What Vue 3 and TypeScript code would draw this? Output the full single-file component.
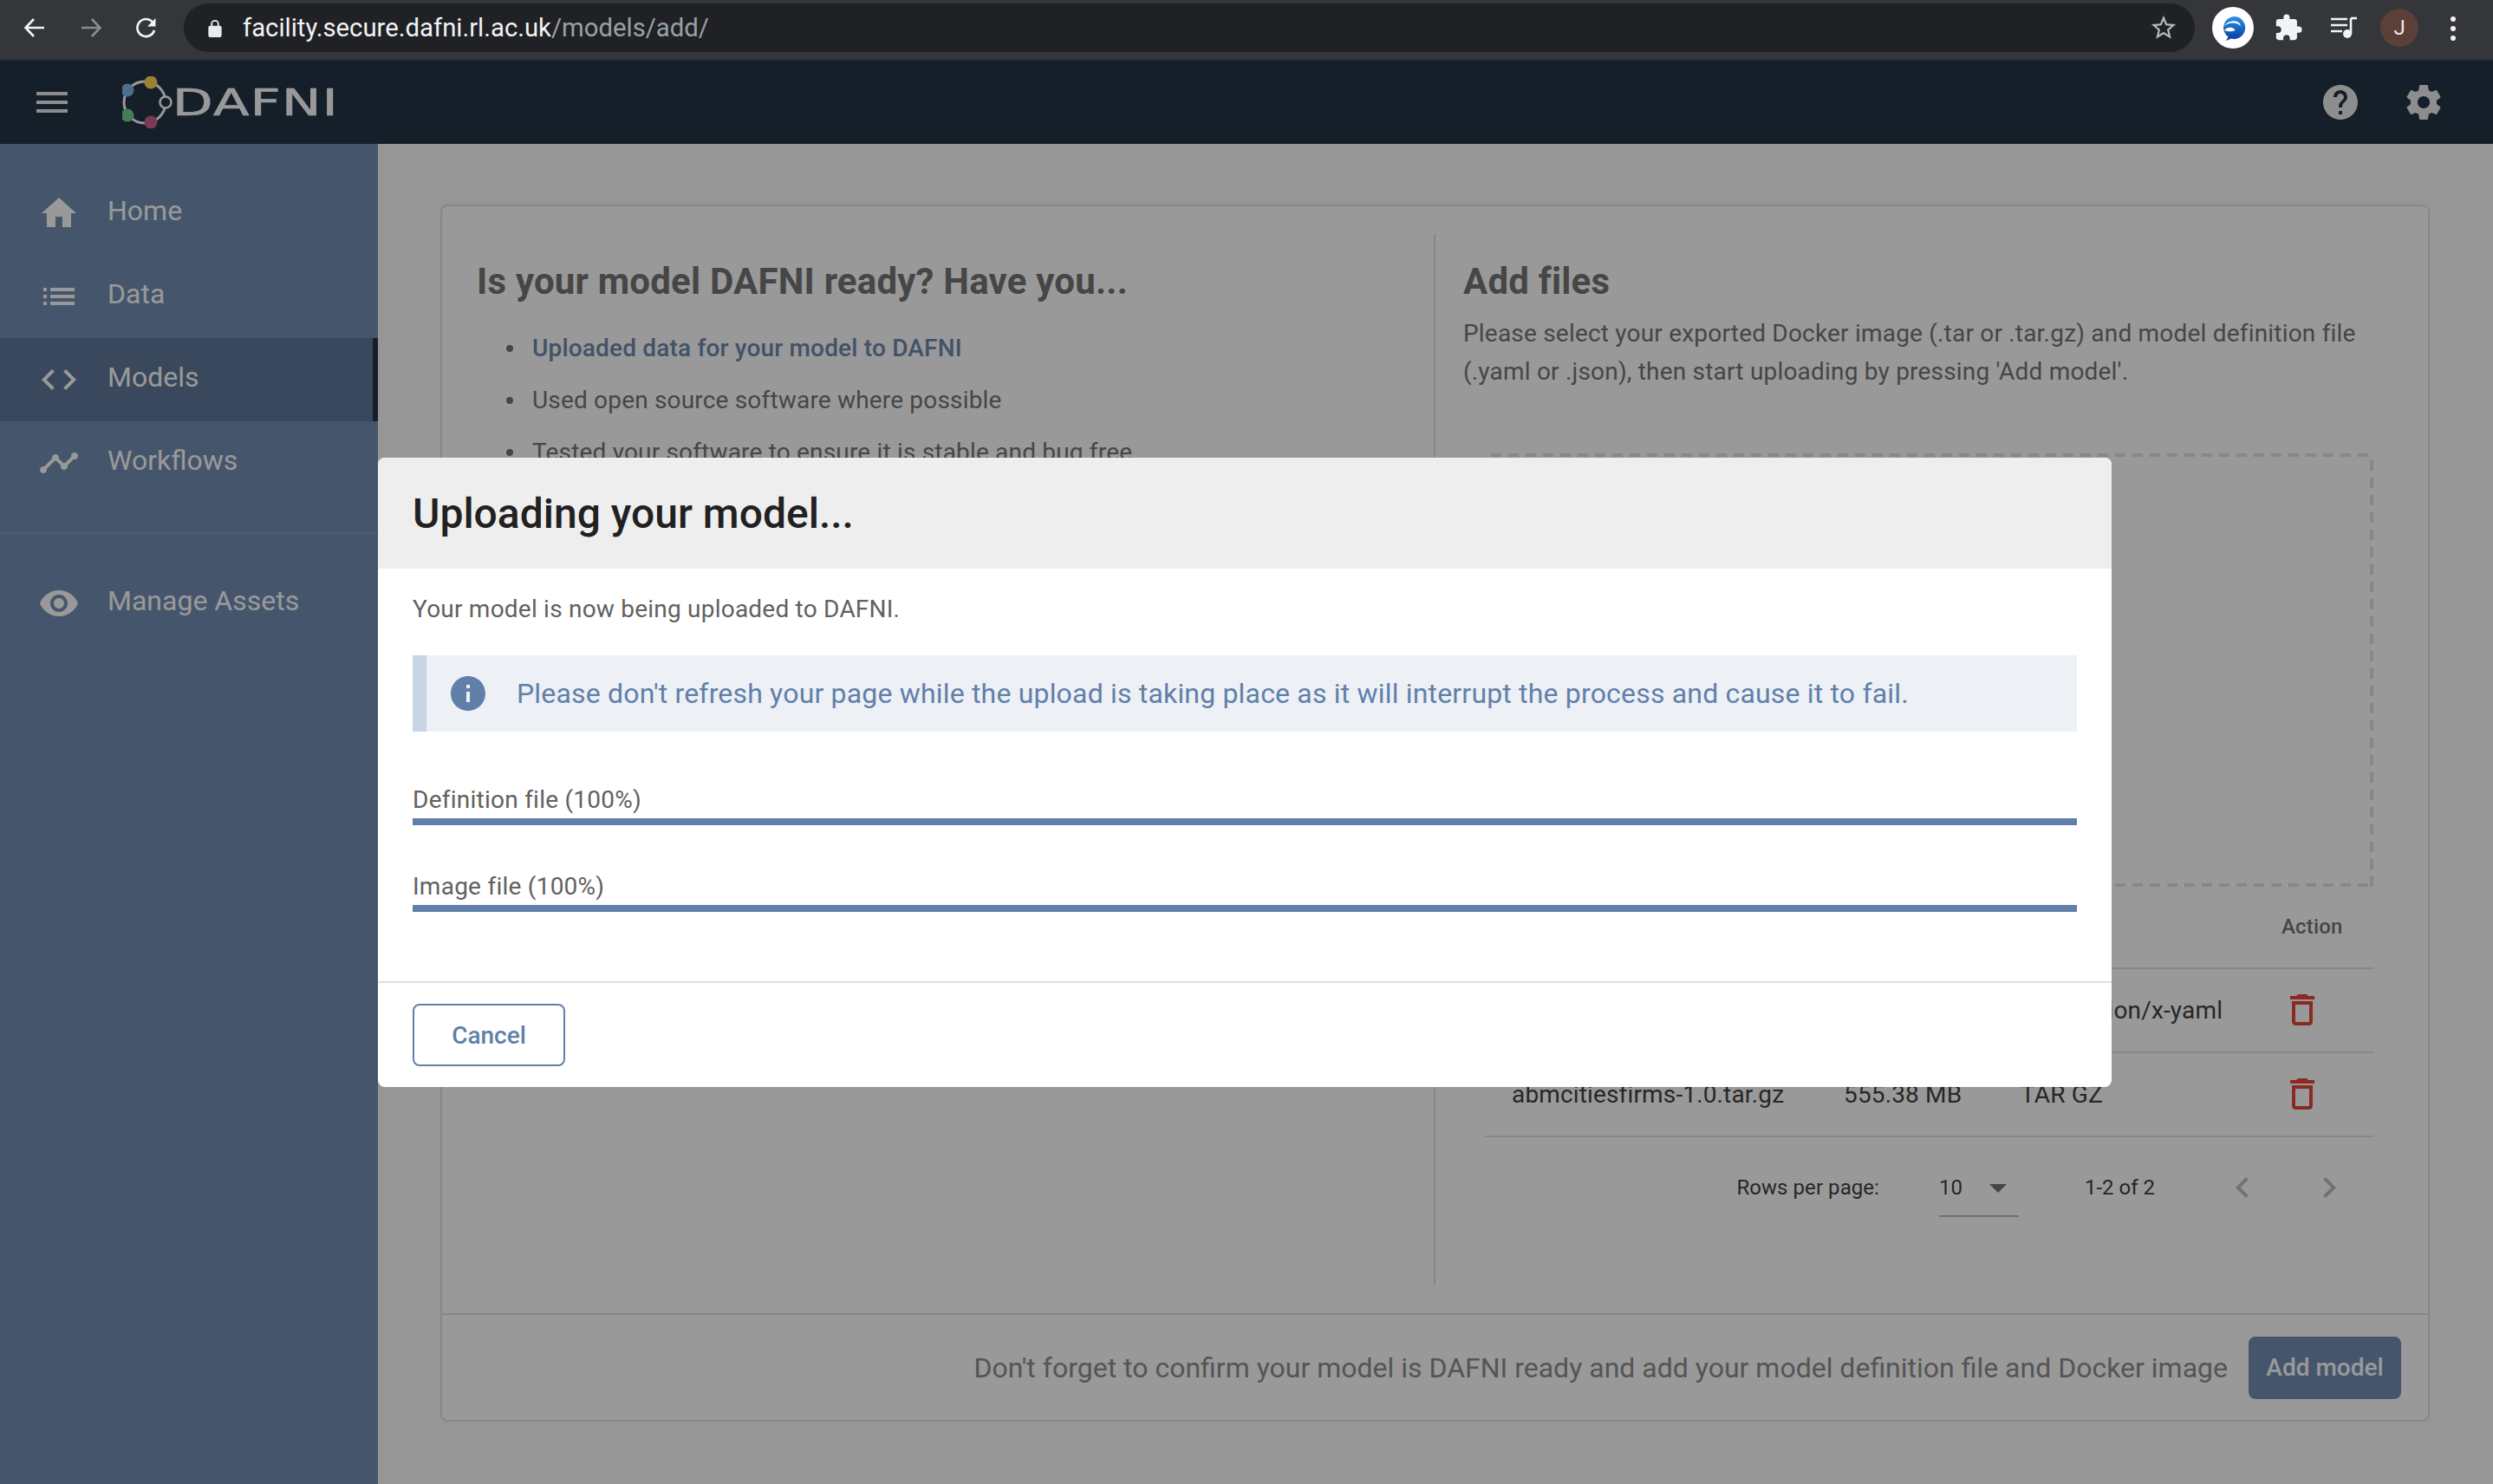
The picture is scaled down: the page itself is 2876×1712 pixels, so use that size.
<script setup lang="ts">
interface NavItem { label: string; path: string; active?: boolean }
const nav: NavItem[] = [
  { label: 'Home', path: 'M10 20v-6h4v6h5v-8h3L12 3 2 12h3v8z' },
  { label: 'Data', path: 'M3 13h2v-2H3v2zm0 4h2v-2H3v2zm0-8h2V7H3v2zm4 4h14v-2H7v2zm0 4h14v-2H7v2zM7 7v2h14V7H7z' },
  { label: 'Models', active: true, path: 'M9.4 16.6L4.8 12l4.6-4.6L8 6l-6 6 6 6 1.4-1.4zm5.2 0l4.6-4.6-4.6-4.6L16 6l6 6-6 6-1.4-1.4z' },
  { label: 'Workflows', path: 'M23 8c0 1.1-.9 2-2 2-.18 0-.35-.02-.51-.07l-3.56 3.55c.05.16.07.34.07.52 0 1.1-.9 2-2 2s-2-.9-2-2c0-.18.02-.36.07-.52l-2.55-2.55c-.16.05-.34.07-.52.07s-.36-.02-.52-.07l-4.55 4.56c.05.16.07.33.07.51 0 1.1-.9 2-2 2s-2-.9-2-2 .9-2 2-2c.18 0 .35.02.51.07l4.56-4.55C8.02 9.36 8 9.18 8 9c0-1.1.9-2 2-2s2 .9 2 2c0 .18-.02.36-.07.52l2.55 2.55c.16-.05.34-.07.52-.07s.36.02.52.07l3.55-3.56C19.02 8.35 19 8.18 19 8c0-1.1.9-2 2-2s2 .9 2 2z' },
]
const eye = 'M12 4.5C7 4.5 2.73 7.61 1 12c1.73 4.39 6 7.5 11 7.5s9.27-3.11 11-7.5c-1.73-4.39-6-7.5-11-7.5zM12 17c-2.76 0-5-2.24-5-5s2.24-5 5-5 5 2.24 5 5-2.24 5-5 5zm0-8c-1.66 0-3 1.34-3 3s1.34 3 3 3 3-1.34 3-3-1.34-3-3-3z'
const checks = [
  { text: 'Uploaded data for your model to DAFNI', link: true },
  { text: 'Used open source software where possible', link: false },
  { text: 'Tested your software to ensure it is stable and bug free', link: false },
]
const files = [
  { name: 'abmcitiesfirms.yaml', size: '2.1 KB', type: 'application/x-yaml' },
  { name: 'abmcitiesfirms-1.0.tar.gz', size: '555.38 MB', type: 'TAR GZ' },
]
const uploads = ['Definition file (100%)', 'Image file (100%)']
</script>

<template>
  <div class="app">
    <div class="chrome">
      <svg class="c-ic back" viewBox="0 0 28 28"><path d="M25 14H4M13 4 3.5 14 13 24" fill="none" stroke="#f1f3f4" stroke-width="2.6"/></svg>
      <svg class="c-ic fwd" viewBox="0 0 28 28"><path d="M3 14h21M15 4l9.5 10L15 24" fill="none" stroke="#8a8b8e" stroke-width="2.6"/></svg>
      <svg class="c-ic reload" viewBox="0 0 28 28"><path d="M23 17a10 10 0 1 1-2-9.5" fill="none" stroke="#f1f3f4" stroke-width="2.6"/><path d="M24.5 3v9.5H15z" fill="#f1f3f4"/></svg>
      <div class="omni">
        <svg class="lock" viewBox="0 0 16 22"><path d="M4 9V6a4 4 0 0 1 8 0v3" fill="none" stroke="#e8eaed" stroke-width="2"/><rect x="0" y="8" width="16" height="14" rx="2" fill="#e8eaed"/></svg>
        <span class="url">facility.secure.dafni.rl.ac.uk<span class="url-path">/models/add/</span></span>
        <svg class="star" viewBox="0 0 24 24"><path d="M22 9.24l-7.19-.62L12 2 9.19 8.63 2 9.24l5.46 4.73L5.82 21 12 17.27 18.18 21l-1.63-7.03L22 9.24zM12 15.4l-3.76 2.27 1-4.28-3.32-2.88 4.38-.38L12 6.1l1.71 4.04 4.38.38-3.32 2.88 1 4.28L12 15.4z" fill="#b4b6b9"/></svg>
      </div>
      <div class="ext">
        <svg viewBox="0 0 32 32" width="32" height="32">
          <defs><linearGradient id="extBlue" x1="0" y1="0" x2="0" y2="1"><stop offset="0" stop-color="#2b8fe6"/><stop offset="1" stop-color="#0b3a9c"/></linearGradient></defs>
          <path d="M17 3a13 13 0 1 1-3 25.600L8 31l2.500-4.500A13 13 0 0 1 17 3z" fill="url(#extBlue)"/>
          <path d="M6 14C9 9 16 7 21 9c2 1 3.500 2.500 4 5-3-3-7-4-11-3.500-3 .4-6 1.500-8 3.500z" fill="#fff"/>
          <path d="M6 19c2-3 6-4 9-3 1.500.5 3 1.500 3.500 3-3 1.500-8 2-12.500 0z" fill="#fff"/>
        </svg>
      </div>
      <svg class="puzzle" viewBox="0 0 24 24"><path d="M20.5 11H19V7c0-1.100-.9-2-2-2h-4V3.500a2.500 2.500 0 0 0-5 0V5H4c-1.100 0-2 .9-2 2v3.800h1.500c1.490 0 2.700 1.210 2.700 2.700s-1.210 2.700-2.700 2.700H2V20c0 1.100.9 2 2 2h3.800v-1.500c0-1.490 1.210-2.700 2.700-2.700s2.700 1.210 2.700 2.700V22H17c1.100 0 2-.9 2-2v-4h1.500a2.500 2.500 0 0 0 0-5z" fill="#f1f3f4"/></svg>
      <svg class="media" viewBox="0 0 32 28"><path d="M1 4h19M1 11h19M1 18h13" stroke="#f1f3f4" stroke-width="2.6" fill="none"/><path d="M24 3v18" stroke="#f1f3f4" stroke-width="2.6"/><path d="M24 3h7" stroke="#f1f3f4" stroke-width="2.6"/><circle cx="20" cy="21" r="5" fill="#f1f3f4"/></svg>
      <div class="avatar">J</div>
      <div class="dots"><i></i><i></i><i></i></div>
    </div>

    <div class="viewport">
      <header class="topbar">
        <svg class="icon" viewBox="0 0 24 24"><path d="M3 18h18v-2H3v2zm0-5h18v-2H3v2zm0-7v2h18V6H3z"/></svg>
        <div class="logo">
          <svg class="ring" viewBox="0 0 58 60" width="58" height="60">
            <circle cx="26" cy="30" r="24" fill="none" stroke="#fff" stroke-width="3"/>
            <circle cx="6" cy="16" r="7.500" fill="#85b7e9"/>
            <circle cx="33" cy="7" r="7.500" fill="#ffd953"/>
            <circle cx="6" cy="45" r="7.500" fill="#6ed08e"/>
            <circle cx="33" cy="53" r="7.500" fill="#c8618e"/>
            <circle cx="50" cy="30" r="6.500" fill="#233546" stroke="#fff" stroke-width="2.600"/>
          </svg>
          <span class="logo-text">DAFNI</span>
        </div>
        <div class="top-actions">
          <svg class="icon" viewBox="0 0 24 24"><path d="M12 2C6.48 2 2 6.48 2 12s4.48 10 10 10 10-4.48 10-10S17.52 2 12 2zm1 17h-2v-2h2v2zm2.07-7.75l-.9.92C13.45 12.9 13 13.5 13 15h-2v-.5c0-1.1.45-2.1 1.17-2.83l1.24-1.26c.37-.36.59-.86.59-1.41 0-1.1-.9-2-2-2s-2 .9-2 2H8c0-2.21 1.79-4 4-4s4 1.79 4 4c0 .88-.36 1.68-.93 2.25z"/></svg>
          <svg class="icon" viewBox="0 0 24 24"><path d="M19.43 12.98c.04-.32.07-.64.07-.98s-.03-.66-.07-.98l2.11-1.65c.19-.15.24-.42.12-.64l-2-3.46c-.12-.22-.39-.3-.61-.22l-2.49 1c-.52-.4-1.08-.73-1.69-.98l-.38-2.65C14.46 2.18 14.25 2 14 2h-4c-.25 0-.46.18-.49.42l-.38 2.65c-.61.25-1.17.59-1.69.98l-2.49-1c-.23-.09-.49 0-.61.22l-2 3.46c-.13.22-.07.49.12.64l2.11 1.65c-.04.32-.07.65-.07.98s.03.66.07.98l-2.11 1.65c-.19.15-.24.42-.12.64l2 3.46c.12.22.39.3.61.22l2.49-1c.52.4 1.08.73 1.69.98l.38 2.65c.03.24.24.42.49.42h4c.25 0 .46-.18.49-.42l.38-2.65c.61-.25 1.17-.59 1.69-.98l2.49 1c.23.09.49 0 .61-.22l2-3.46c.12-.22.07-.49-.12-.64l-2.11-1.65zM12 15.5c-1.93 0-3.5-1.57-3.5-3.5s1.57-3.5 3.5-3.5 3.5 1.57 3.5 3.5-1.57 3.5-3.5 3.5z"/></svg>
        </div>
      </header>

      <div class="below">
        <aside class="sidebar">
          <a v-for="item in nav" :key="item.label" class="nav-item" :class="{ active: item.active }">
            <svg class="icon" viewBox="0 0 24 24"><path :d="item.path"/></svg>
            <span>{{ item.label }}</span>
          </a>
          <div class="nav-divider"></div>
          <a class="nav-item">
            <svg class="icon" viewBox="0 0 24 24"><path :d="eye"/></svg>
            <span>Manage Assets</span>
          </a>
        </aside>

        <main class="main">
          <section class="card">
            <div class="card-top">
              <div class="col-left">
                <h2>Is your model DAFNI ready? Have you...</h2>
                <ul>
                  <li v-for="c in checks" :key="c.text" :class="{ link: c.link }">{{ c.text }}</li>
                </ul>
              </div>
              <div class="col-right">
                <h2>Add files</h2>
                <p>Please select your exported Docker image (.tar or .tar.gz) and model definition file (.yaml or .json), then start uploading by pressing 'Add model'.</p>
                <div class="drop"></div>
                <div class="table">
                  <div class="tr th">
                    <span>Name</span><span>Size</span><span>Type</span><span>Action</span>
                  </div>
                  <div v-for="f in files" :key="f.name" class="tr">
                    <span>{{ f.name }}</span><span>{{ f.size }}</span><span>{{ f.type }}</span>
                    <svg class="icon trash" viewBox="0 0 24 24"><path d="M6 19c0 1.1.9 2 2 2h8c1.1 0 2-.9 2-2V7H6v12zM8 9h8v10H8V9zm7.5-5l-1-1h-5l-1 1H5v2h14V4z"/></svg>
                  </div>
                </div>
                <div class="pager">
                  <span class="rows">Rows per page:</span>
                  <div class="select">
                    <span>10</span>
                    <svg class="icon" viewBox="0 0 24 24"><path d="M7 10l5 5 5-5z"/></svg>
                  </div>
                  <span class="range">1-2 of 2</span>
                  <svg class="icon chev" viewBox="0 0 24 24"><path d="M15.41 7.41L14 6l-6 6 6 6 1.41-1.41L10.83 12z"/></svg>
                  <svg class="icon chev" viewBox="0 0 24 24"><path d="M10 6L8.59 7.41 13.17 12l-4.58 4.59L10 18l6-6z"/></svg>
                </div>
              </div>
            </div>
            <div class="card-foot">
              <span>Don't forget to confirm your model is DAFNI ready and add your model definition file and Docker image</span>
              <button class="add" type="button">Add model</button>
            </div>
          </section>
        </main>
      </div>

      <div class="scrim">
        <div class="dialog">
          <div class="d-head"><h1>Uploading your model...</h1></div>
          <div class="d-body">
            <p class="d-lead">Your model is now being uploaded to DAFNI.</p>
            <div class="alert">
              <svg viewBox="0 0 24 24" width="48" height="48"><path d="M12 2C6.48 2 2 6.48 2 12s4.48 10 10 10 10-4.48 10-10S17.52 2 12 2zm1 15h-2v-6h2v6zm0-8h-2V7h2v2z" fill="#6080aa"/></svg>
              <span>Please don't refresh your page while the upload is taking place as it will interrupt the process and cause it to fail.</span>
            </div>
            <div class="uploads">
              <div v-for="u in uploads" :key="u" class="upload">
                <div class="u-label">{{ u }}</div>
                <div class="u-bar"></div>
              </div>
            </div>
          </div>
          <div class="d-foot"><button class="cancel" type="button">Cancel</button></div>
        </div>
      </div>
    </div>
  </div>
</template>

<style>
html, body { margin: 0; padding: 0; }
</style>

<style scoped>
.app { width: 2876px; height: 1712px; display: flex; flex-direction: column; overflow: hidden; font-family: Roboto, sans-serif; background: #fafafa; }
.icon { width: 48px; height: 48px; flex: none; fill: currentColor; display: block; }

.chrome { height: 70px; flex: none; box-sizing: border-box; background: #35363a; border-bottom: 2px solid #2d2e31; display: flex; align-items: flex-start; position: relative; }
.c-ic { width: 28px; height: 28px; flex: none; margin-top: 18px; }
.back { margin-left: 26px; }
.fwd { margin-left: 37px; }
.reload { margin-left: 36px; }
.omni { margin-left: 29px; margin-top: 4px; width: 2320px; height: 56px; border-radius: 28px; background: #202124; display: flex; align-items: center; flex: none; }
.lock { width: 16px; height: 21px; margin-left: 28px; flex: none; }
.url { margin-left: 24px; font-size: 29.3px; color: #f1f3f4; white-space: nowrap; }
.url-path { color: #9aa0a6; }
.star { width: 34px; height: 34px; margin-left: auto; margin-right: 19px; flex: none; }
.ext { width: 48px; height: 48px; margin-left: 20px; margin-top: 8px; border-radius: 50%; background: #fff; display: flex; align-items: center; justify-content: center; flex: none; }
.puzzle { width: 34px; height: 34px; margin-left: 23px; margin-top: 15px; flex: none; }
.media { width: 32px; height: 28px; margin-left: 31px; margin-top: 18px; flex: none; }
.avatar { width: 44px; height: 44px; margin-left: 26px; margin-top: 10px; border-radius: 50%; background: #5a4038; color: #f5e6e0; font-size: 24px; display: flex; align-items: center; justify-content: center; flex: none; }
.dots { margin-left: 37px; margin-top: 19px; display: flex; flex-direction: column; gap: 5px; flex: none; }
.dots i { display: block; width: 6px; height: 6px; border-radius: 50%; background: #f1f3f4; }

.viewport { flex: 1; position: relative; display: flex; flex-direction: column; min-height: 0; }
.topbar { height: 96px; flex: none; background: #233546; color: #ebebeb; display: flex; align-items: center; padding-left: 36px; }
.logo { display: flex; align-items: center; margin-left: 57px; }
.logo-text { font-family: "DejaVu Sans", sans-serif; font-weight: 400; font-size: 42px; letter-spacing: 1px; -webkit-text-stroke: 0.7px #fff; color: #fff; line-height: 1; margin-top: 2px; transform: scaleX(1.44); transform-origin: left center; }
.top-actions { margin-left: auto; display: flex; gap: 48px; margin-right: 56px; }

.below { flex: 1; display: flex; min-height: 0; }
.sidebar { width: 436px; flex: none; background: #738fb4; padding-top: 32px; box-sizing: border-box; color: #fff; }
.nav-item { height: 96px; display: flex; align-items: center; padding-left: 44px; box-sizing: border-box; font-size: 32px; }
.nav-item span { margin-left: 32px; position: relative; top: -3px; }
.nav-item.active { background: #5f7899; border-right: 6px solid #233546; }
.nav-divider { height: 2px; background: #7f99bc; margin: 32px 0 32px; }

.main { flex: 1; min-width: 0; display: flex; }
.card { flex: 1; margin: 70px 73px 72px 72px; border: 2px solid #e2e2e2; border-radius: 8px; background: #fff; display: flex; flex-direction: column; box-sizing: border-box; color: #757575; }
.card-top { flex: 1; display: flex; padding: 32px 0; min-height: 0; }
.col-left { width: 1146px; box-sizing: border-box; border-right: 2px solid #e2e2e2; padding: 29px 0 0 40px; flex: none; }
.col-right { flex: 1; padding: 29px 0 0 32px; min-width: 0; }
h2 { margin: 0; font-size: 42px; font-weight: 700; line-height: 52px; letter-spacing: 0.2px; color: #757575; }
ul { margin: 31px 0 0; padding: 0 0 0 64px; list-style: none; }
li { font-size: 28px; line-height: 40px; margin-bottom: 20px; height: 40px; letter-spacing: 0.18px; }
li::before { content: ""; display: inline-block; width: 8px; height: 8px; border-radius: 50%; background: #757575; margin-left: -30px; margin-right: 22px; vertical-align: 5px; }
li.link { color: #6f89ad; font-weight: 500; }
.col-right p { margin: 12px 0 0; font-size: 28px; line-height: 44px; width: 1060px; letter-spacing: 0.2px; }
.drop { margin: 72px 0 0 32px; width: 1018px; height: 500px; box-sizing: border-box;
  background:
    repeating-linear-gradient(90deg, #e2e2e2 0 12px, transparent 12px 20px) top / 100% 4px no-repeat,
    repeating-linear-gradient(90deg, #e2e2e2 0 12px, transparent 12px 20px) bottom / 100% 4px no-repeat,
    repeating-linear-gradient(0deg, #e2e2e2 0 12px, transparent 12px 20px) left / 4px 100% no-repeat,
    repeating-linear-gradient(0deg, #e2e2e2 0 12px, transparent 12px 20px) right / 4px 100% no-repeat; }
.table { margin-left: 24px; width: 1026px; }
.tr { display: grid; grid-template-columns: 415px 204px 301px 1fr; align-items: center; height: 94px; padding-bottom: 1px; border-bottom: 2px solid #e2e2e2; font-size: 28px; letter-spacing: 0.15px; color: #424242; box-sizing: content-box; }
.tr > span:first-child { padding-left: 32px; }
.th { height: 91px; padding-bottom: 2px; font-size: 24px; font-weight: 500; color: #757575; }
.trash { color: #e84639; }
.pager { margin-left: 24px; width: 1026px; display: flex; align-items: center; justify-content: flex-end; padding-right: 27px; box-sizing: border-box; height: 116px; font-size: 24px; color: #424242; }
.rows { margin-right: 69px; letter-spacing: 0.06px; }
.select { width: 92px; display: flex; align-items: center; justify-content: space-between; height: 66px; border-bottom: 2px solid #bdbdbd; margin-top: 2px; box-sizing: border-box; color: #424242; }
.select .icon { color: #757575; }
.range { margin: 0 77px 0 76px; }
.chev { color: #bdbdbd; }
.chev + .chev { margin-left: 52px; }
.card-foot { height: 123px; flex: none; box-sizing: border-box; border-top: 2px solid #e2e2e2; display: flex; align-items: center; justify-content: flex-end; padding-right: 31px; gap: 24px; font-size: 32px; color: #8e8e8e; }
.add { width: 176px; height: 72px; border: 0; border-radius: 8px; background: #738fb4; color: #fff; font: 500 28px Roboto, sans-serif; padding: 0; }

.scrim { position: absolute; inset: 0; background: rgba(0, 0, 0, 0.4); display: flex; align-items: center; justify-content: center; padding-right: 4px; }
.dialog { width: 2000px; height: 726px; background: #fff; border-radius: 8px; overflow: hidden; display: flex; flex-direction: column; }
.d-head { height: 128px; flex: none; background: #eee; padding: 0 40px; display: flex; align-items: center; }
h1 { margin: 0; font-size: 48px; font-weight: 500; color: #212121; }
.d-body { flex: 1; padding: 25px 40px 0; }
.d-lead { margin: 0; font-size: 28px; line-height: 44px; letter-spacing: 0.22px; color: #616161; }
.alert { margin-top: 31px; height: 88px; box-sizing: border-box; background: #edf0f5; border-left: 16px solid #c9d4e4; display: flex; align-items: center; padding-left: 24px; color: #6080aa; font-size: 32px; letter-spacing: 0.18px; gap: 32px; }
.uploads { margin-top: 59px; display: flex; flex-direction: column; gap: 51px; }
.u-label { font-size: 28px; line-height: 40px; letter-spacing: 0.25px; color: #616161; }
.u-bar { height: 8px; margin-top: 1px; background: #6080aa; }
.d-foot { height: 122px; flex: none; box-sizing: border-box; border-top: 2px solid #e0e0e0; padding: 24px 40px; }
.cancel { width: 176px; height: 72px; background: #fff; border: 2px solid #6080aa; border-radius: 8px; color: #6080aa; font: 500 28px Roboto, sans-serif; padding: 0; }
</style>
